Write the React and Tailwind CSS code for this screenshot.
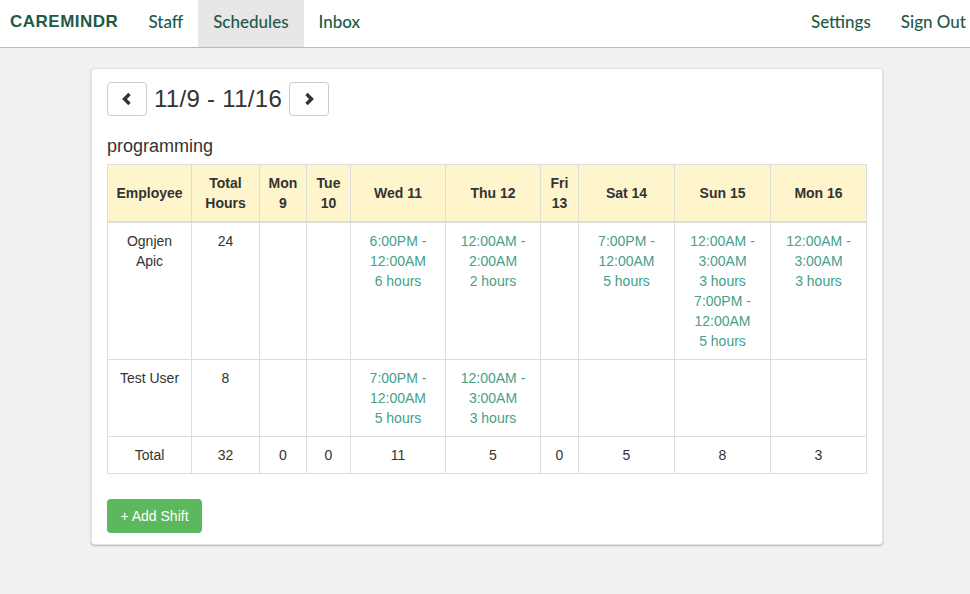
import React from "react";

const days = [
  { label: ["Mon", "9"], w: 47 },
  { label: ["Tue", "10"], w: 44 },
  { label: ["Wed 11"], w: 95 },
  { label: ["Thu 12"], w: 95 },
  { label: ["Fri", "13"], w: 38 },
  { label: ["Sat 14"], w: 96 },
  { label: ["Sun 15"], w: 96 },
  { label: ["Mon 16"], w: 96 },
];

const rows = [
  {
    name: ["Ognjen", "Apic"],
    total: "24",
    shifts: [
      null,
      null,
      [["6:00PM -", "12:00AM", "6 hours"]],
      [["12:00AM -", "2:00AM", "2 hours"]],
      null,
      [["7:00PM -", "12:00AM", "5 hours"]],
      [
        ["12:00AM -", "3:00AM", "3 hours"],
        ["7:00PM -", "12:00AM", "5 hours"],
      ],
      [["12:00AM -", "3:00AM", "3 hours"]],
    ],
  },
  {
    name: ["Test User"],
    total: "8",
    shifts: [
      null,
      null,
      [["7:00PM -", "12:00AM", "5 hours"]],
      [["12:00AM -", "3:00AM", "3 hours"]],
      null,
      null,
      null,
      null,
    ],
  },
];

const totals = ["0", "0", "11", "5", "0", "5", "8", "3"];

function Chevron({ dir }) {
  return (
    <svg width="14" height="14" viewBox="0 0 14 14">
      {dir === "left" ? (
        <path d="M9.5 2 L4.5 7 L9.5 12" fill="none" stroke="#333" strokeWidth="3.4" strokeLinejoin="miter" />
      ) : (
        <path d="M4.5 2 L9.5 7 L4.5 12" fill="none" stroke="#333" strokeWidth="3.4" strokeLinejoin="miter" />
      )}
    </svg>
  );
}

export default function App() {
  const arial = { fontFamily: '"Liberation Sans", Arial, sans-serif' };
  const lato = { fontFamily: "Lato, sans-serif" };
  return (
    <div className="min-h-screen w-full overflow-hidden bg-[#f1f1f1] text-[#333]" style={arial}>
      <nav className="flex h-[48px] items-stretch justify-between border-b border-[#b9b9b9] bg-white">
        <div className="flex items-stretch">
          <div className="flex items-center pb-[3px] pl-[10px] text-[17px] font-bold tracking-[0.5px] text-[#1d5a47]">
            CAREMINDR
          </div>
          <div className="ml-[15px] flex items-stretch text-[17px] font-medium text-[#1d5a47]" style={lato}>
            <a className="flex items-center px-[15px] pb-[3px]">Staff</a>
            <a className="flex items-center bg-[#e7e7e7] px-[15px] pb-[3px]">Schedules</a>
            <a className="flex items-center px-[15px] pb-[3px]">Inbox</a>
          </div>
        </div>
        <div className="mr-[-11px] flex items-stretch text-[17px] font-medium text-[#1d5a47]" style={lato}>
          <a className="flex items-center px-[15px] pb-[3px]">Settings</a>
          <a className="flex items-center px-[15px] pb-[3px]">Sign Out</a>
        </div>
      </nav>

      <div className="ml-[91px] mt-[20px] w-[792px] rounded-[4px] border border-[#e3e3e3] bg-white px-[15px] pb-[11px] pt-[13px] shadow-[0_1px_2px_rgba(0,0,0,0.25)]">
        <div className="flex items-center">
          <button className="flex h-[34px] w-[40px] items-center justify-center rounded-[4px] border border-[#ccc] bg-white">
            <Chevron dir="left" />
          </button>
          <div className="mx-[7px] text-[24px] leading-[34px] tracking-[0.3px] text-[#333]">11/9 - 11/16</div>
          <button className="flex h-[34px] w-[40px] items-center justify-center rounded-[4px] border border-[#ccc] bg-white">
            <Chevron dir="right" />
          </button>
        </div>

        <div className="mt-[18px] text-[18px] leading-[24px]">programming</div>

        <table className="mt-[6px] w-[759px] table-fixed border-collapse text-center text-[14px] leading-[20px]">
          <colgroup>
            <col style={{ width: 84 }} />
            <col style={{ width: 68 }} />
            {days.map((d, i) => (
              <col key={i} style={{ width: d.w }} />
            ))}
          </colgroup>
          <thead>
            <tr className="bg-[#fef5cc]">
              <th className="border border-b-2 border-[#ddd] p-[8px] align-middle font-bold">Employee</th>
              <th className="border border-b-2 border-[#ddd] p-[8px] align-middle font-bold">
                Total
                <br />
                Hours
              </th>
              {days.map((d, i) => (
                <th key={i} className="border border-b-2 border-[#ddd] px-[4px] py-[8px] align-middle font-bold">
                  {d.label.map((l, j) => (
                    <div key={j}>{l}</div>
                  ))}
                </th>
              ))}
            </tr>
          </thead>
          <tbody>
            {rows.map((r, ri) => (
              <tr key={ri}>
                <td className="border border-[#ddd] p-[8px] align-top">
                  {r.name.map((n, j) => (
                    <div key={j}>{n}</div>
                  ))}
                </td>
                <td className="border border-[#ddd] p-[8px] align-top">{r.total}</td>
                {r.shifts.map((s, si) => (
                  <td key={si} className="border border-[#ddd] px-[4px] py-[8px] align-top text-[#46a08a]">
                    {s &&
                      s.map((sh, k) =>
                        sh.map((line, li) => <div key={k + "-" + li}>{line}</div>)
                      )}
                  </td>
                ))}
              </tr>
            ))}
            <tr>
              <td className="border border-[#ddd] p-[8px]">Total</td>
              <td className="border border-[#ddd] p-[8px]">32</td>
              {totals.map((t, i) => (
                <td key={i} className="border border-[#ddd] px-[4px] py-[8px]">
                  {t}
                </td>
              ))}
            </tr>
          </tbody>
        </table>

        <button className="mt-[25px] h-[34px] w-[95px] rounded-[4px] bg-[#5cb85c] text-[14px] text-white">
          + Add Shift
        </button>
      </div>
    </div>
  );
}
